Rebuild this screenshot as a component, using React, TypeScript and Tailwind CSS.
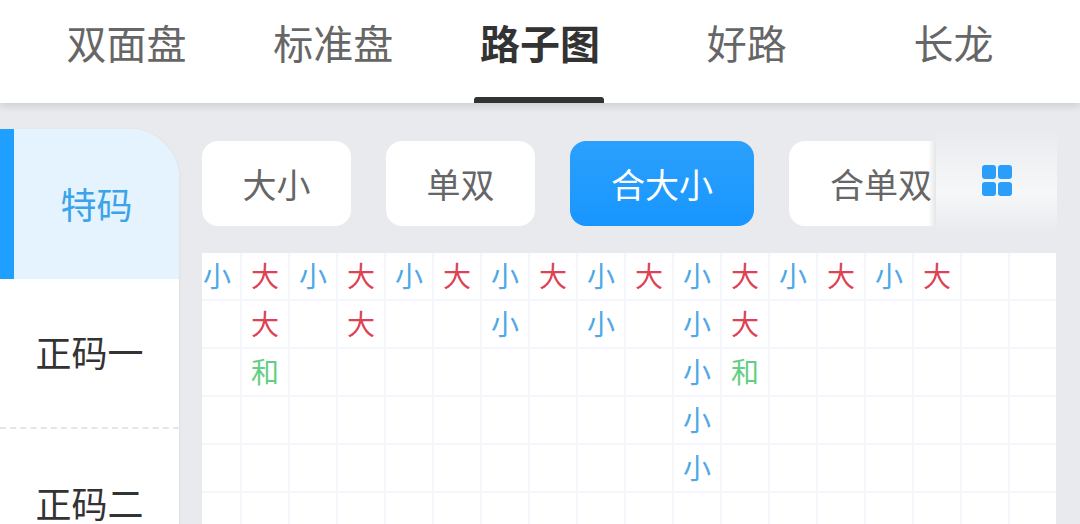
import React from 'react';

const tabs = ['双面盘', '标准盘', '路子图', '好路', '长龙'];
const pills = [
  { label: '大小', width: 'w-[149px]' },
  { label: '单双', width: 'w-[149px]' },
  { label: '合大小', width: 'w-[184px]', active: true },
  { label: '合单双', width: 'w-[184px]' },
];

// each entry is one column of the road map
const road = [
  '小', '大大和', '小', '大大', '小', '大', '小小', '大', '小小', '大',
  '小小小小小', '大大和', '小', '大', '小', '大', '', '',
];

const cellColor = (ch: string) => {
  if (ch === '大') return 'text-[#dd4453]';
  if (ch === '和') return 'text-[#62cf85]';
  return 'text-[#4fa9e6]';
};

const RoadGrid: React.FC = () => (
  <div className="h-[300px] w-[854px] overflow-hidden bg-white">
    <div className="-ml-[8px] flex w-[864px]">
      {road.map((col, x) => (
        <div key={x} className="w-[48px] shrink-0">
          {[0, 1, 2, 3, 4, 5].map((y) => (
            <div
              key={y}
              className={`flex h-[48px] items-center justify-center border-r-2 border-b-2 border-[#f5f6fc] pb-[3px] text-[28px] leading-none ${cellColor(col[y])}`}
            >
              {col[y] || ''}
            </div>
          ))}
        </div>
      ))}
    </div>
  </div>
);

export default function App() {
  return (
    <div
      className="h-[524px] w-[1080px] overflow-hidden bg-[#e8eaee]"
      style={{ fontFamily: '"Noto Sans CJK SC", "Noto Sans", sans-serif' }}
    >
      <div className="relative z-10 flex h-[103px] bg-white px-[23px] shadow-[0_3px_8px_rgba(0,0,0,0.12)]">
        {tabs.map((t) => (
          <div
            key={t}
            className={`relative flex w-[207px] items-start justify-center pt-[12px] text-[40px] leading-[60px] ${
              t === '路子图' ? 'font-bold text-[#333333]' : 'text-[#666666]'
            }`}
          >
            {t}
            {t === '路子图' && (
              <div className="absolute bottom-0 left-[37px] h-[6px] w-[130px] rounded-t-[3px] bg-[#333333]" />
            )}
          </div>
        ))}
      </div>

      <div className="flex">
        <div className="mt-[26px] w-[179px] shrink-0 overflow-hidden rounded-tr-[50px] bg-white shadow-[1px_0_3px_rgba(0,0,0,0.04)]">
          <div className="flex h-[150px] items-center justify-center border-l-[14px] border-[#1f9fff] bg-[#e4f3fe] pb-[2px] text-[36px] leading-none text-[#3ba3ea]">
            特码
          </div>
          <div className="flex h-[150px] items-center justify-center border-b-2 border-dashed border-[#e2e4ee] pb-[4px] text-[36px] leading-none text-[#333333]">
            正码一
          </div>
          <div className="flex h-[150px] items-center justify-center pb-[4px] text-[36px] leading-none text-[#333333]">
            正码二
          </div>
        </div>

        <div className="relative min-w-0 flex-1 pl-[23px]">
          <div className="mt-[38px] flex h-[85px] gap-[35px] overflow-hidden">
            {pills.map((p) => (
              <div
                key={p.label}
                className={`flex shrink-0 items-center justify-center rounded-[16px] text-[34px] ${p.width} ${
                  p.active
                    ? 'bg-gradient-to-b from-[#2ba0fd] to-[#1796fe] text-white'
                    : 'bg-white text-[#666666]'
                }`}
              >
                {p.label}
              </div>
            ))}
          </div>
          <div className="mt-[27px]">
            <RoadGrid />
          </div>

          <div className="absolute top-[27px] left-[757px] flex h-[104px] w-[121px] items-center justify-center bg-gradient-to-b from-[#e9ebef] via-[#f6f7f8] via-60% to-[#e8eaee]">
            <div className="absolute top-[11px] -left-[8px] h-[85px] w-[8px] bg-gradient-to-l from-black/10 to-transparent" />
            <svg width="30" height="31" viewBox="0 0 30 31" fill="#2b9efc" className="-mt-[3px]">
              <rect x="0" y="0" width="14" height="14" rx="3" />
              <rect x="16" y="0" width="14" height="14" rx="3" />
              <rect x="0" y="17" width="14" height="14" rx="3" />
              <rect x="16" y="17" width="14" height="14" rx="3" />
            </svg>
          </div>
        </div>
      </div>
    </div>
  );
}
